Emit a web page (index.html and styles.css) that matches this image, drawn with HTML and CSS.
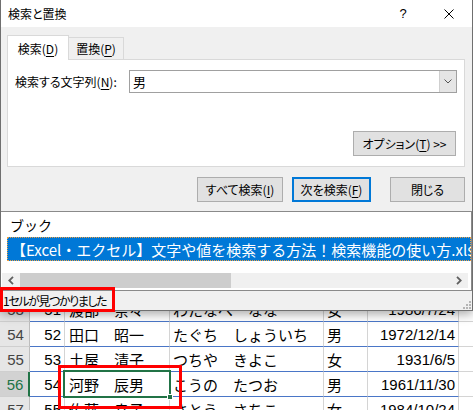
FILE: index.html
```html
<!DOCTYPE html>
<html lang="ja">
<head>
<meta charset="utf-8">
<title>検索と置換</title>
<link rel="stylesheet" href="styles.css">
</head>
<body>
<div class="sheet">
  <div class="row">
    <div class="rh">53</div><div class="c num">51</div><div class="c name">渡部　奈々</div><div class="c kana">わたなべ　なな</div><div class="c sex">女</div><div class="c date">1986/7/24</div><div class="c last"></div>
  </div>
  <div class="row">
    <div class="rh">54</div><div class="c num">52</div><div class="c name">田口　昭一</div><div class="c kana">たぐち　しょういち</div><div class="c sex">男</div><div class="c date">1972/12/14</div><div class="c last"></div>
  </div>
  <div class="row">
    <div class="rh">55</div><div class="c num">53</div><div class="c name">土屋　清子</div><div class="c kana">つちや　きよこ</div><div class="c sex">女</div><div class="c date">1931/6/5</div><div class="c last"></div>
  </div>
  <div class="row">
    <div class="rh rh-sel">56</div><div class="c num">54</div><div class="c name active">河野　辰男<span class="handle"></span></div><div class="c kana">こうの　たつお</div><div class="c sex">男</div><div class="c date">1961/11/30</div><div class="c last"></div>
  </div>
  <div class="row">
    <div class="rh">57</div><div class="c num">55</div><div class="c name">佐藤　幸子</div><div class="c kana">さとう　さちこ</div><div class="c sex">女</div><div class="c date">1984/10/24</div><div class="c last"></div>
  </div>
</div>

<div class="dialog">
  <div class="titlebar">
    <span class="title">検索と置換</span>
    <span class="cap help">?</span>
    <span class="cap close"><svg width="10" height="10" viewBox="0 0 10 10"><path d="M0.5 0.5L9.5 9.5M9.5 0.5L0.5 9.5" stroke="#000" stroke-width="1" fill="none"/></svg></span>
  </div>
  <div class="body">
    <div class="tabs">
      <div class="tab active">検索(<u>D</u>)</div>
      <div class="tab">置換(<u>P</u>)</div>
    </div>
    <div class="panel">
      <div class="field">
        <span class="label">検索する文字列(<u>N</u>):</span>
        <div class="combo">
          <span class="value">男</span>
          <span class="drop"><svg width="8" height="5" viewBox="0 0 8 5"><path d="M0.5 0.5L4 4L7.5 0.5" stroke="#555" stroke-width="1" fill="none"/></svg></span>
        </div>
      </div>
      <div class="opt-row">
        <button class="btn opt">オプション(<u>T</u>) &gt;&gt;</button>
      </div>
    </div>
    <div class="actions">
      <button class="btn all">すべて検索(<u>I</u>)</button>
      <button class="btn next">次を検索(<u>F</u>)</button>
      <button class="btn closebtn">閉じる</button>
    </div>
  </div>
  <div class="list">
    <div class="list-head">ブック</div>
    <div class="list-item">【Excel・エクセル】文字や値を検索する方法！検索機能の使い方.xlsx</div>
    <div class="hscroll">
      <span class="arrow"><svg width="6" height="9" viewBox="0 0 6 9"><path d="M5 0.8L1.3 4.5L5 8.2" stroke="#606060" stroke-width="1.8" fill="none"/></svg></span>
      <span class="thumb"></span>
      <span class="track"></span>
      <span class="arrow"><svg width="6" height="9" viewBox="0 0 6 9"><path d="M1 0.8L4.7 4.5L1 8.2" stroke="#606060" stroke-width="1.8" fill="none"/></svg></span>
    </div>
  </div>
  <div class="status">
    <span class="status-text">1セルが見つかりました</span>
    <svg class="grip" width="9" height="9" viewBox="0 0 9 9">
      <rect x="7" y="1" width="2" height="2" fill="#b4b4b4"/>
      <rect x="4" y="4" width="2" height="2" fill="#b4b4b4"/>
      <rect x="7" y="4" width="2" height="2" fill="#b4b4b4"/>
      <rect x="1" y="7" width="2" height="2" fill="#b4b4b4"/>
      <rect x="4" y="7" width="2" height="2" fill="#b4b4b4"/>
      <rect x="7" y="7" width="2" height="2" fill="#b4b4b4"/>
    </svg>
  </div>
  <div class="mark-status"></div>
</div>
</body>
</html>
```
FILE: styles.css
```css
* { box-sizing: border-box; margin: 0; padding: 0; }
html, body { width: 473px; height: 410px; overflow: hidden; background: #fff; }
body { position: relative; font-family: "Noto Sans CJK JP", sans-serif; color: #000; }

/* spreadsheet behind */
.sheet { padding-top: 297px; font-family: "Liberation Sans", "Noto Sans CJK JP", sans-serif; font-size: 15px; }
.row { display: grid; grid-template-columns: 30px 35px 105px 154px 44px 91px 1fr; height: 25px; }
.rh { background: #e6e6e6; color: #444; border-right: 1px solid #bdbdbd; border-bottom: 1px solid #cfcfcf; display: flex; align-items: center; justify-content: center; padding-left: 2px; }
.rh-sel { background: #d2d2d2; color: #217346; border-right: 2px solid #217346; }
.c { border-right: 1px solid #d4d4d4; border-bottom: 1px solid #4a76c7; display: flex; align-items: center; padding: 0 3px; white-space: nowrap; overflow: hidden; }
.num, .date { justify-content: flex-end; }
.name { padding-left: 4px; }
.c.last { border-right: none; border-bottom-color: #d4d4d4; }
.c.active { position: relative; overflow: visible; }
.c.active::before { content: ""; position: absolute; left: -2px; top: -2px; right: -2px; bottom: -2px; border: 2px solid #217346; }
.c.active::after { content: ""; position: absolute; left: -7px; top: -7px; width: 118px; height: 38px; border: 3px solid #f00; }
.handle { position: absolute; right: -4px; bottom: -4px; width: 6px; height: 6px; background: #217346; border: 1px solid #fff; z-index: 2; }

/* dialog */
.dialog { position: absolute; left: 0; top: 0; width: 473px; background: #f0f0f0; border: 1px solid #6f6f6f; border-top: none; box-shadow: 0 3px 10px rgba(0,0,0,0.35); font-size: 12px; font-feature-settings: "palt"; }
.titlebar { height: 27px; background: #fff; display: flex; align-items: center; padding-left: 7px; }
.title { flex: 1; font-size: 12px; }
.cap { width: 46px; height: 27px; display: flex; align-items: center; justify-content: center; }
.help { font-size: 13px; font-family: "Liberation Sans", sans-serif; }

.body { padding: 8px 6px 0 6px; }
.tabs { display: flex; align-items: flex-end; height: 25px; margin-bottom: -1px; position: relative; z-index: 1; }
.tab { height: 23px; width: 55px; display: flex; align-items: center; justify-content: center; border: 1px solid #d9d9d9; border-left: none; background: #f0f0f0; }
.tab.active { height: 25px; width: 62px; background: #fff; border-left: 1px solid #d9d9d9; border-bottom: none; }
u { text-decoration: underline; text-underline-offset: 2px; }

.panel { background: #fff; border: 1px solid #d9d9d9; height: 108px; margin-right: 1px; padding: 10px 8px 0 7px; }
.field { display: flex; align-items: center; height: 23px; }
.label { flex: 0 0 114px; }
.combo { flex: 0 0 328px; height: 23px; border: 1px solid #a0a0a0; display: flex; align-items: center; }
.value { flex: 1; padding-left: 3px; font-size: 13px; }
.drop { width: 17px; height: 21px; background: #e5e5e5; border-left: 1px solid #cfcfcf; display: flex; align-items: center; justify-content: center; }
.opt-row { display: flex; justify-content: flex-end; margin-top: 38px; }

.btn { height: 25px; background: #e1e1e1; border: 1px solid #adadad; font-family: "Noto Sans CJK JP", sans-serif; font-size: 12px; font-feature-settings: "palt"; color: #000; }
.opt { width: 103px; }
.actions { display: flex; justify-content: flex-end; margin-top: 10px; padding-right: 1px; }
.all { width: 86px; }
.next { width: 79px; margin-left: 9px; border: 2px solid #0078d7; }
.closebtn { width: 75px; margin-left: 19px; }

.list { margin-top: 9px; background: #fff; border-top: 1px solid #8a8a8a; border-bottom: 1px solid #8a8a8a; border-right: 1px solid #8a8a8a; height: 80px; font-feature-settings: normal; }
.list-head { height: 25px; padding-left: 9px; font-size: 14px; display: flex; align-items: center; }
.list-item { height: 24px; margin-left: 6px; background: #0078d7; color: #fff; font-size: 15px; white-space: nowrap; overflow: hidden; padding-left: 4px; display: flex; align-items: center; outline: 1px dotted #f0a040; outline-offset: -1px; }
.hscroll { margin-top: 12px; height: 15px; margin-left: 1px; margin-right: 3px; display: flex; background: #f0f0f0; }
.arrow { width: 18px; display: flex; align-items: center; justify-content: center; }
.thumb { width: 211px; background: #cdcdcd; }
.track { flex: 1; }

.status { height: 19px; position: relative; display: flex; align-items: center; padding-left: 2px; }
.status-text { font-size: 12px; letter-spacing: -1.4px; }
.grip { position: absolute; right: 1px; bottom: 1px; }
.mark-status { position: absolute; left: -1px; top: 287px; width: 115px; height: 25px; border: 3px solid #f00; }
```
